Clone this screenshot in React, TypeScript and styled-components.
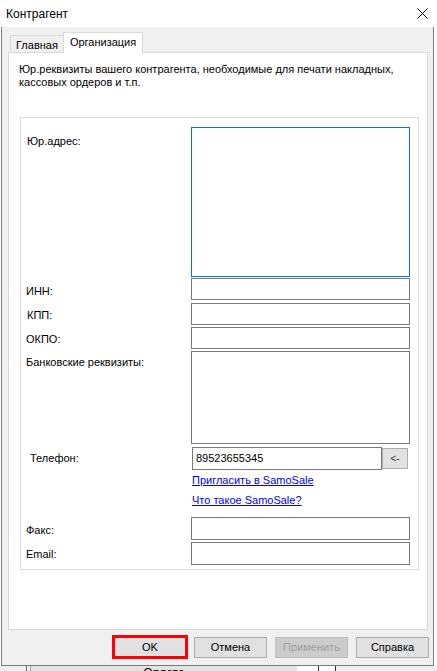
import React from 'react';
import styled, { createGlobalStyle } from 'styled-components';

const GlobalStyle = createGlobalStyle`
  html, body {
    margin: 0;
    padding: 0;
  }
  body {
    width: 437px;
    height: 671px;
    overflow: hidden;
    background: #ffffff;
    font-family: "Liberation Sans", Arial, sans-serif;
    font-size: 11px;
    color: #000;
  }
  * {
    box-sizing: border-box;
  }
`;

const Desktop = styled.div`
  width: 437px;
  height: 671px;
  overflow: hidden;
  display: flex;
  flex-direction: column;
  background: #ffffff;
`;

const Window = styled.div`
  width: 433px;
  height: 666px;
  margin-left: 1px;
  flex: none;
  display: flex;
  flex-direction: column;
`;

const TitleBar = styled.div`
  height: 27px;
  flex: none;
  background: #ffffff;
  display: flex;
  align-items: center;
  justify-content: space-between;
  padding: 0 6px 0 5px;
`;

const Title = styled.span`
  font-size: 12px;
  color: #000;
`;

const CloseIcon = styled.svg`
  width: 11px;
  height: 11px;
  display: block;
`;

const Body = styled.div`
  flex: 1;
  background: #f0f0f0;
  border: 1px solid #7a7a7a;
  border-top: none;
  padding: 5px 5px 0 6px;
  display: flex;
  flex-direction: column;
`;

const TabStrip = styled.div`
  height: 20px;
  display: flex;
  align-items: flex-end;
  padding-left: 2px;
`;

const Tab = styled.div<{ $active?: boolean }>`
  height: ${p => (p.$active ? '21px' : '17px')};
  margin-bottom: ${p => (p.$active ? '-1px' : '0')};
  position: relative;
  z-index: ${p => (p.$active ? 1 : 0)};
  background: ${p => (p.$active ? '#ffffff' : '#f0f0f0')};
  border: 1px solid #d9d9d9;
  border-bottom: none;
  border-right: ${p => (p.$active ? '1px solid #d9d9d9' : 'none')};
  padding: ${p => (p.$active ? '3px 6px 0 6px' : '3px 5px 0 5px')};
  font-size: 11px;
  line-height: 13px;
  white-space: nowrap;
`;

const Panel = styled.div`
  height: 578px;
  flex: none;
  background: #ffffff;
  border: 1px solid #d9d9d9;
  padding: 10px 8px 0 10px;
  display: flex;
  flex-direction: column;
`;

const Description = styled.p`
  margin: 0;
  font-size: 11px;
  line-height: 13px;
  width: 400px;
`;

const GroupBox = styled.div`
  margin: 28px 0 0 1px;
  border: 1px solid #dcdcdc;
  padding: 9px 8px 4px 5px;
  display: flex;
  flex-direction: column;
`;

const FieldRow = styled.div<{ $gap?: number }>`
  display: grid;
  grid-template-columns: 165px 219px;
  margin-top: ${p => p.$gap ?? 0}px;
`;

const Label = styled.div<{ $top: number; $indent?: number }>`
  padding-top: ${p => p.$top}px;
  padding-left: ${p => p.$indent ?? 0}px;
  font-size: 11px;
  line-height: 13px;
  white-space: nowrap;
`;

const TextInput = styled.div<{ $h?: number; $focused?: boolean }>`
  height: ${p => p.$h ?? 22}px;
  border: 1px solid ${p => (p.$focused ? '#0078d7' : '#7a7a7a')};
  background: #ffffff;
  padding: 3px 3px 0 3px;
  font-size: 11px;
  line-height: 13px;
`;

const PhoneField = styled.div`
  display: flex;
  align-items: flex-start;
  padding-left: 1px;
`;

const PhoneInput = styled(TextInput)`
  width: 190px;
  padding-top: 4px;
`;

const SmallButton = styled.div`
  width: 26px;
  height: 21px;
  margin-top: 1px;
  background: #e1e1e1;
  border: 1px solid #adadad;
  display: flex;
  align-items: center;
  justify-content: center;
  font-size: 10px;
  color: #333;
`;

const LinkStack = styled.div`
  grid-column: 2;
  display: flex;
  flex-direction: column;
  gap: 7px;
  padding: 4px 0 0 1px;
`;

const Link = styled.a`
  color: #0000ff;
  text-decoration: underline;
  font-size: 11px;
  line-height: 13px;
  cursor: pointer;
  align-self: flex-start;
`;

const ButtonRow = styled.div`
  display: flex;
  justify-content: flex-end;
  align-items: center;
  gap: 8px;
  padding-top: 5px;
  margin-right: -1px;
`;

const DialogButton = styled.div<{ $disabled?: boolean }>`
  width: 73px;
  height: 21px;
  background: ${p => (p.$disabled ? '#cccccc' : '#e1e1e1')};
  border: 1px solid ${p => (p.$disabled ? '#bfbfbf' : '#adadad')};
  color: ${p => (p.$disabled ? '#a0a0a0' : '#000')};
  display: flex;
  align-items: center;
  justify-content: center;
  font-size: 11px;
`;

const OkButton = styled(DialogButton)`
  width: 76px;
  height: 24px;
  margin-right: -2px;
  border: 3px solid #ff0000;
`;

const BehindStrip = styled.div`
  height: 5px;
  display: flex;
  background: #f0f0f0;
`;

const BehindCell = styled.div<{ $w: number; $bg: string; $line?: string }>`
  width: ${p => p.$w}px;
  flex: none;
  background: ${p => p.$bg};
  border-left: ${p => (p.$line ? `1px solid ${p.$line}` : 'none')};
  overflow: hidden;
  font-size: 12px;
  line-height: 12px;
  text-align: center;
`;

const CellText = styled.div`
  margin-top: 1px;
`;

const App: React.FC = () => {
  return (
    <>
      <GlobalStyle />
      <Desktop>
        <Window>
          <TitleBar>
            <Title>Контрагент</Title>
            <CloseIcon viewBox="0 0 11 11">
              <path d="M0.5 0.5 L10.5 10.5 M10.5 0.5 L0.5 10.5" stroke="#000" strokeWidth="1" fill="none" />
            </CloseIcon>
          </TitleBar>
          <Body>
            <TabStrip>
              <Tab>Главная</Tab>
              <Tab $active>Организация</Tab>
            </TabStrip>
            <Panel>
              <Description>
                Юр.реквизиты вашего контрагента, необходимые для печати накладных,
                кассовых ордеров и т.п.
              </Description>
              <GroupBox>
                <FieldRow>
                  <Label $top={8} $indent={1}>Юр.адрес:</Label>
                  <TextInput $h={150} $focused />
                </FieldRow>
                <FieldRow $gap={1}>
                  <Label $top={7}>ИНН:</Label>
                  <TextInput />
                </FieldRow>
                <FieldRow $gap={3}>
                  <Label $top={6} $indent={1}>КПП:</Label>
                  <TextInput />
                </FieldRow>
                <FieldRow $gap={2}>
                  <Label $top={6}>ОКПО:</Label>
                  <TextInput />
                </FieldRow>
                <FieldRow $gap={2}>
                  <Label $top={5}>Банковские реквизиты:</Label>
                  <TextInput $h={93} />
                </FieldRow>
                <FieldRow $gap={3}>
                  <Label $top={5} $indent={4}>Телефон:</Label>
                  <PhoneField>
                    <PhoneInput $h={23}>89523655345</PhoneInput>
                    <SmallButton>&lt;-</SmallButton>
                  </PhoneField>
                  <LinkStack>
                    <Link>Пригласить в SamoSale</Link>
                    <Link>Что такое SamoSale?</Link>
                  </LinkStack>
                </FieldRow>
                <FieldRow $gap={10}>
                  <Label $top={7}>Факс:</Label>
                  <TextInput $h={23} />
                </FieldRow>
                <FieldRow $gap={2}>
                  <Label $top={6}>Email:</Label>
                  <TextInput $h={23} />
                </FieldRow>
              </GroupBox>
            </Panel>
            <ButtonRow>
              <OkButton>OK</OkButton>
              <DialogButton>Отмена</DialogButton>
              <DialogButton $disabled>Применить</DialogButton>
              <DialogButton>Справка</DialogButton>
            </ButtonRow>
          </Body>
        </Window>
        <BehindStrip>
          <BehindCell $w={26} $bg="#f0f0f0" />
          <BehindCell $w={4} $bg="#f0f0f0" $line="#6a6a6a" />
          <BehindCell $w={267} $bg="#e3e3e3" $line="#a0a0a0">
            <CellText>Оплата</CellText>
          </BehindCell>
          <BehindCell $w={21} $bg="#ffffff" />
          <BehindCell $w={17} $bg="#ffffff" $line="#333333" />
          <BehindCell $w={102} $bg="#f0f0f0" $line="#333333" />
        </BehindStrip>
      </Desktop>
    </>
  );
};

export default App;
